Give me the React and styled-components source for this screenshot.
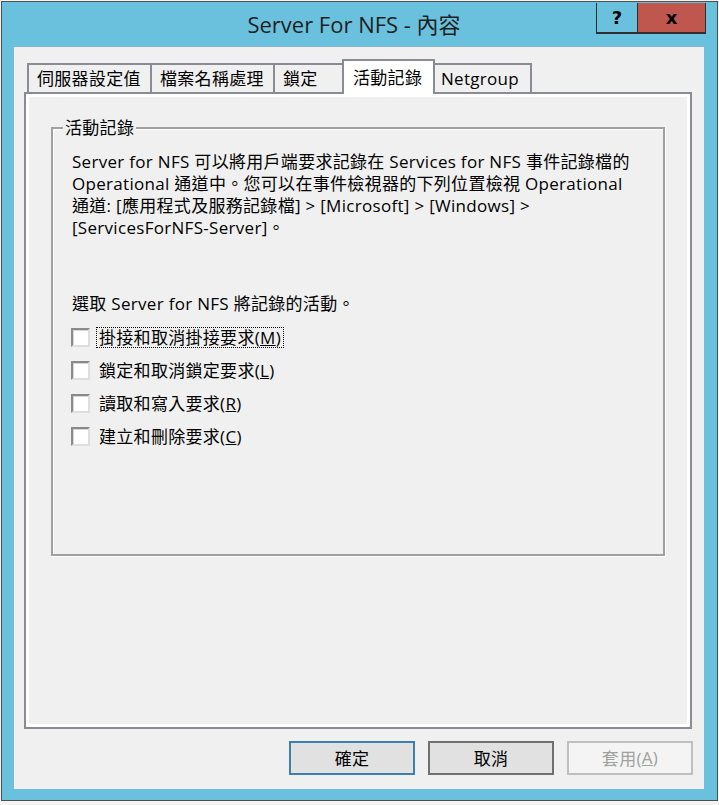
import React from "react";
import styled, { createGlobalStyle, css } from "styled-components";

const GlobalStyle = createGlobalStyle`
  html, body {
    margin: 0;
    padding: 0;
    background: #f4f4f4;
  }
  body {
    font-family: "Open Sans", "Noto Sans CJK TC", sans-serif;
    font-size: 17px;
    letter-spacing: 0.3px;
    color: #000;
  }
`;

const tabs = [
  { label: "伺服器設定值", w: 125 },
  { label: "檔案名稱處理", w: 125 },
  { label: "鎖定", w: 73 },
  { label: "活動記錄", w: 93, active: true },
  { label: "Netgroup", w: 101 },
];

const options = [
  { text: "掛接和取消掛接要求", key: "M", focused: true },
  { text: "鎖定和取消鎖定要求", key: "L" },
  { text: "讀取和寫入要求", key: "R" },
  { text: "建立和刪除要求", key: "C" },
];

const App = () => {
  return (
    <>
      <GlobalStyle />
      <Window>
        <TitleBar>
          <Title>Server For NFS - 內容</Title>
          <CaptionButtons>
            <CaptionButton $w={42} $bg="#6ac1dd">?</CaptionButton>
            <CaptionButton $w={69} $bg="#c0574f">x</CaptionButton>
          </CaptionButtons>
        </TitleBar>
        <Frame>
          <Client>
            <TabStrip>
              {tabs.map((t) => (
                <Tab key={t.label} $w={t.w} $active={t.active}>
                  {t.label}
                </Tab>
              ))}
            </TabStrip>
            <Panel>
              <Group>
                <Legend>活動記錄</Legend>
                <GroupBody>
                  <Description>
                    Server for NFS 可以將用戶端要求記錄在 Services for NFS 事件記錄檔的
                    <br />
                    Operational 通道中。您可以在事件檢視器的下列位置檢視 Operational
                    <br />
                    通道: [應用程式及服務記錄檔] &gt; [Microsoft] &gt; [Windows] &gt;
                    <br />
                    [ServicesForNFS-Server]。
                  </Description>
                  <Prompt>選取 Server for NFS 將記錄的活動。</Prompt>
                  <CheckList>
                    {options.map((o) => (
                      <CheckRow key={o.key}>
                        <CheckBox />
                        <CheckLabel $focused={o.focused}>
                          {o.text}(<u>{o.key}</u>)
                        </CheckLabel>
                      </CheckRow>
                    ))}
                  </CheckList>
                </GroupBody>
              </Group>
            </Panel>
            <ButtonRow>
              <DialogButton $variant="default">確定</DialogButton>
              <DialogButton>取消</DialogButton>
              <DialogButton $variant="disabled">
                套用(<u>A</u>)
              </DialogButton>
            </ButtonRow>
          </Client>
        </Frame>
      </Window>
    </>
  );
};

const Window = styled.div`
  box-sizing: border-box;
  width: 717px;
  height: 800px;
  margin: 1px 0 0 1px;
  border: 1px solid #4f4f4f;
  background: #6ac1dd;
  display: flex;
  flex-direction: column;
`;

const TitleBar = styled.div`
  display: grid;
  grid-template-columns: 1fr auto 1fr;
  height: 44px;
  padding-right: 11px;
`;

const Title = styled.div`
  grid-column: 2;
  align-self: center;
  margin-top: -1px;
  font-size: 22px;
  line-height: 26px;
  letter-spacing: 0;
  color: #1e1e1e;
  white-space: nowrap;
`;

const CaptionButtons = styled.div`
  grid-column: 3;
  justify-self: end;
  align-self: start;
  display: flex;
  margin-top: 1px;
`;

const CaptionButton = styled.div`
  box-sizing: border-box;
  width: ${(p) => p.$w}px;
  height: 31px;
  background: ${(p) => p.$bg};
  border: 1px solid #2e2e2e;
  border-top: none;
  border-bottom-width: 2px;
  display: flex;
  align-items: center;
  justify-content: center;
  font-family: "DejaVu Sans", sans-serif;
  font-weight: bold;
  font-size: 18px;
  letter-spacing: 0;
  color: #000;

  & + & {
    margin-left: -1px;
  }
`;

const Frame = styled.div`
  flex: 1;
  display: flex;
  padding: 0 13px 11px 11px;
`;

const Client = styled.div`
  flex: 1;
  display: flex;
  flex-direction: column;
  background: #f0f0f0;
  border-top: 1px solid #86b6ca;
  border-left: 1px solid #86b6ca;
  padding: 12px 12px 13px 10px;
`;

const TabStrip = styled.div`
  display: flex;
  align-items: flex-end;
  height: 33px;
  padding-left: 3px;
`;

const Tab = styled.div`
  box-sizing: border-box;
  width: ${(p) => p.$w}px;
  height: 29px;
  margin-left: -2px;
  padding-left: 8px;
  display: flex;
  align-items: center;
  border: 2px solid #898c95;
  border-bottom: none;
  background: #f0f0f0;
  white-space: nowrap;
  line-height: 20px;

  &:first-child {
    margin-left: 0;
  }

  ${(p) =>
    p.$active &&
    css`
      position: relative;
      z-index: 1;
      height: 35px;
      margin-left: -4px;
      margin-right: -2px;
      margin-bottom: -2px;
      padding-left: 9px;
      background: #fff;
    `}
`;

const Panel = styled.div`
  box-sizing: border-box;
  height: 637px;
  border: 2px solid #898c95;
  box-shadow: inset 0 0 0 3px #fff;
  background: #f0f0f0;
  display: flow-root;
`;

const Group = styled.fieldset`
  box-sizing: border-box;
  height: 439px;
  margin: 23px 25px 0;
  padding: 0;
  min-inline-size: 0;
  border: 2px solid #a0a0a0;
  box-shadow: inset 1px 1px 0 #fff, 1px 1px 0 #fff;
`;

const Legend = styled.legend`
  margin-left: 10px;
  padding: 0 2px;
  line-height: 22px;
  background: #f0f0f0;
`;

const GroupBody = styled.div`
  padding: 12px 19px 0;
`;

const Description = styled.p`
  margin: 0;
  line-height: 22px;
  white-space: nowrap;
`;

const Prompt = styled.p`
  margin: 54px 0 0;
  line-height: 22px;
  white-space: nowrap;
`;

const CheckList = styled.div`
  display: flex;
  flex-direction: column;
  gap: 11px;
  margin-top: 11px;
`;

const CheckRow = styled.label`
  display: flex;
  align-items: center;
  height: 22px;
`;

const CheckBox = styled.span`
  box-sizing: border-box;
  width: 19px;
  height: 19px;
  margin-left: -1px;
  border: 2px solid;
  border-color: #8a8a8a #dedede #dedede #8a8a8a;
  background: #fff;
  box-shadow: inset 1px 1px 0 #d6d6d6;
`;

const CheckLabel = styled.span`
  margin-left: 6px;
  padding: 0 2px;
  line-height: 19px;
  border: 1px dotted ${(p) => (p.$focused ? "#000" : "transparent")};
  white-space: nowrap;
`;

const ButtonRow = styled.div`
  display: flex;
  justify-content: flex-end;
  gap: 13px;
  margin-top: 12px;
  margin-right: -1px;
`;

const variants = {
  default: css`
    border-color: #3c7fb1;
    background: #e1e1e1;
    color: #000;
  `,
  normal: css`
    border-color: #707070;
    background: #e1e1e1;
    color: #000;
  `,
  disabled: css`
    border-color: #bfbfbf;
    background: #f4f4f4;
    color: #a0a0a0;
  `,
};

const DialogButton = styled.div`
  box-sizing: border-box;
  width: 126px;
  height: 34px;
  padding-bottom: 2px;
  border: 2px solid;
  display: flex;
  align-items: center;
  justify-content: center;
  font-size: 17px;
  ${(p) => variants[p.$variant || "normal"]}
`;

export default App;
